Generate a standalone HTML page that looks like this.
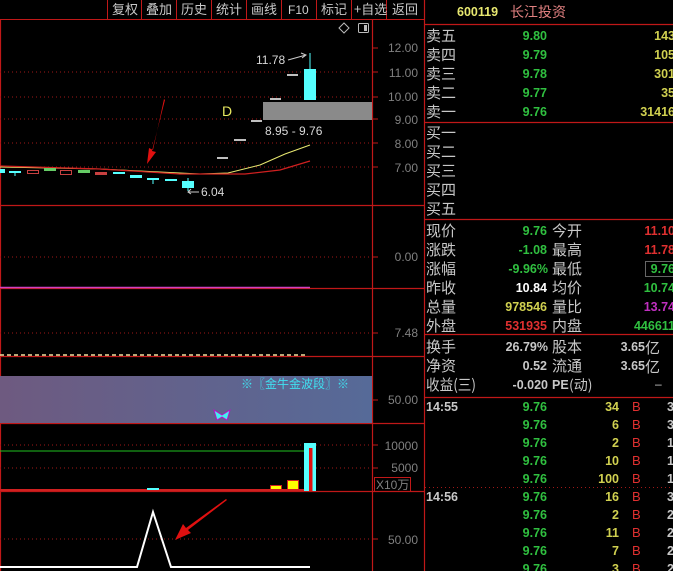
<!DOCTYPE html>
<html><head><meta charset="utf-8"><style>
html,body{margin:0;padding:0;background:#000;}
svg{display:block}
text{font-family:"Liberation Sans","Noto Sans CJK SC",sans-serif;}
.c{font-family:"Noto Sans CJK SC","WenQuanYi Zen Hei",sans-serif;font-size:15px;fill:#c8c8c8}
.n{font-size:12.5px;font-weight:bold}
.ax{font-size:12px;fill:#808080}
</style></head><body>
<svg width="673" height="571" viewBox="0 0 673 571" xmlns="http://www.w3.org/2000/svg">
<rect width="673" height="571" fill="#000"/>
<g stroke="#c01818" stroke-width="1">
<line x1="0" y1="19.5" x2="424" y2="19.5"/>
<line x1="107.5" y1="0" x2="107.5" y2="19"/><line x1="141.5" y1="0" x2="141.5" y2="19"/><line x1="176.5" y1="0" x2="176.5" y2="19"/><line x1="211.5" y1="0" x2="211.5" y2="19"/><line x1="246.5" y1="0" x2="246.5" y2="19"/><line x1="281.5" y1="0" x2="281.5" y2="19"/><line x1="316.5" y1="0" x2="316.5" y2="19"/><line x1="351.5" y1="0" x2="351.5" y2="19"/><line x1="386.5" y1="0" x2="386.5" y2="19"/>
</g>
<g>
<text x="112" y="14" class="c" style="font-size:13px">复权</text><text x="146" y="14" class="c" style="font-size:13px">叠加</text><text x="181" y="14" class="c" style="font-size:13px">历史</text><text x="216" y="14" class="c" style="font-size:13px">统计</text><text x="251" y="14" class="c" style="font-size:13px">画线</text><text x="288" y="14" style="font-size:12px;fill:#d0d0d0">F10</text><text x="321" y="14" class="c" style="font-size:13px">标记</text><text x="354" y="14" class="c" style="font-size:13px">+自选</text><text x="392" y="14" class="c" style="font-size:13px">返回</text>
</g>
<g stroke="#c01818" stroke-width="1.2">
<line x1="372.5" y1="20" x2="372.5" y2="571"/>
<line x1="424.5" y1="0" x2="424.5" y2="571"/>
<line x1="0" y1="205.5" x2="424" y2="205.5"/>
<line x1="0" y1="288.5" x2="424" y2="288.5"/>
<line x1="0" y1="356.5" x2="424" y2="356.5"/>
<line x1="0" y1="423.5" x2="424" y2="423.5"/>
<line x1="0" y1="491.5" x2="424" y2="491.5"/>
<line x1="0.5" y1="20" x2="0.5" y2="571"/>
</g>
<g stroke="#a01818" stroke-width="1" stroke-dasharray="1,3">
<line x1="0" y1="72" x2="372" y2="72"/><line x1="0" y1="97" x2="372" y2="97"/><line x1="0" y1="119" x2="372" y2="119"/><line x1="0" y1="143" x2="372" y2="143"/><line x1="0" y1="167" x2="372" y2="167"/>
<line x1="0" y1="257" x2="372" y2="257"/><line x1="0" y1="333" x2="372" y2="333"/>
<line x1="0" y1="445" x2="372" y2="445"/><line x1="0" y1="468" x2="372" y2="468"/><line x1="0" y1="539" x2="372" y2="539"/>
<line x1="425" y1="487.5" x2="673" y2="487.5"/>
</g>
<g stroke="#c01818"><line x1="372" y1="48" x2="378" y2="48"/><line x1="372" y1="72" x2="378" y2="72"/><line x1="372" y1="97" x2="378" y2="97"/><line x1="372" y1="119" x2="378" y2="119"/><line x1="372" y1="143" x2="378" y2="143"/><line x1="372" y1="167" x2="378" y2="167"/><line x1="372" y1="257" x2="378" y2="257"/><line x1="372" y1="333" x2="378" y2="333"/><line x1="372" y1="400" x2="378" y2="400"/><line x1="372" y1="445" x2="378" y2="445"/><line x1="372" y1="468" x2="378" y2="468"/><line x1="372" y1="539" x2="378" y2="539"/></g>
<g>
<text x="418" y="52" text-anchor="end" class="ax">12.00</text><text x="418" y="77" text-anchor="end" class="ax">11.00</text><text x="418" y="101" text-anchor="end" class="ax">10.00</text><text x="418" y="124" text-anchor="end" class="ax">9.00</text><text x="418" y="148" text-anchor="end" class="ax">8.00</text><text x="418" y="172" text-anchor="end" class="ax">7.00</text>
<text x="418" y="261" text-anchor="end" class="ax">0.00</text><text x="418" y="337" text-anchor="end" class="ax">7.48</text><text x="418" y="404" text-anchor="end" class="ax">50.00</text>
<text x="418" y="450" text-anchor="end" class="ax">10000</text><text x="418" y="472" text-anchor="end" class="ax">5000</text><text x="418" y="544" text-anchor="end" class="ax">50.00</text>
</g>
<rect x="374.5" y="477.5" width="36" height="14" fill="none" stroke="#c01818"/>
<text x="376" y="489" class="ax">X10万</text>
<path d="M344 23 L349 28 L344 33 L339 28 Z" fill="none" stroke="#bbb"/>
<rect x="358.5" y="23.5" width="10" height="9" rx="1" fill="none" stroke="#bbb"/><rect x="364" y="25" width="3" height="6" fill="#bbb"/>
<rect x="263" y="102" width="109" height="18" fill="#8a8a8a"/>
<text x="222" y="116" style="font-size:14px;fill:#e8e860">D</text>
<text x="256" y="64" style="font-size:12px;fill:#d8d8d8">11.78</text>
<path d="M288 60 L306 55 M301 53 L306 55 L302 58" stroke="#ccc" fill="none"/>
<text x="265" y="135" style="font-size:12px;fill:#d8d8d8">8.95 - 9.76</text>
<text x="201" y="196" style="font-size:12px;fill:#d8d8d8">6.04</text>
<path d="M199 192 L188 192 M191 189 L188 192 L191 194" stroke="#ccc" fill="none"/>
<line x1="310" y1="53" x2="310" y2="69" stroke="#5ff"/>
<rect x="304" y="69" width="12" height="31" fill="#5ff"/>
<g stroke="#fff" stroke-width="1.5"><line x1="217" y1="158" x2="228" y2="158"/><line x1="234" y1="140" x2="246" y2="140"/><line x1="251" y1="121" x2="262" y2="121"/><line x1="270" y1="99" x2="281" y2="99"/><line x1="287" y1="75" x2="298" y2="75"/></g>
<path d="M0 167 L100 169 L200 174 L228 173 L260 165 L285 154 L310 145" stroke="#e8e870" fill="none"/>
<path d="M0 166 L100 169 L180 174 L245 174 L280 170 L310 161" stroke="#d02020" fill="none" stroke-width="1.2"/>
<g fill="#5ff"><rect x="0" y="169" width="5" height="4"/><rect x="9" y="171" width="12" height="2"/><rect x="113" y="172" width="12" height="2"/><rect x="130" y="175" width="12" height="3"/><rect x="147" y="178" width="12" height="2"/><rect x="165" y="179" width="12" height="2"/><rect x="182" y="181" width="12" height="7"/></g>
<g stroke="#5ff"><line x1="15" y1="171" x2="15" y2="176"/><line x1="153" y1="178" x2="153" y2="184"/><line x1="188" y1="178" x2="188" y2="191"/></g>
<g fill="#6c6"><rect x="44" y="168" width="12" height="3"/><rect x="78" y="170" width="12" height="3"/></g>
<g fill="none" stroke="#c84040"><rect x="27.5" y="170.5" width="11" height="3"/><rect x="60.5" y="170.5" width="11" height="4"/></g>
<rect x="95" y="172" width="12" height="3" fill="#c84040"/>
<path d="M164 99 L153 150 L149 148 L147 164 L156 152 L152 151 L165 100 Z" fill="#e01010"/>
<line x1="0" y1="287.5" x2="310" y2="287.5" stroke="#d040c0" stroke-width="1.5"/>
<line x1="0" y1="355" x2="308" y2="355" stroke="#f0e0a0" stroke-dasharray="4,3" stroke-width="1.5"/>
<defs><linearGradient id="g" x1="0" x2="1"><stop offset="0" stop-color="#6e5a80"/><stop offset="1" stop-color="#566a98"/></linearGradient></defs>
<rect x="0" y="376" width="372" height="47" fill="url(#g)"/>
<text x="241" y="388" style="font-family:'Noto Sans CJK SC',sans-serif;font-size:12px;fill:#40e0f0">※〖金牛金波段〗※</text>
<path d="M214 410 L222 415 L230 410 L227 420 L222 417 L217 420 Z" fill="#4ee" stroke="#c0c" stroke-width="0.8"/>
<line x1="0" y1="451" x2="305" y2="451" stroke="#20c020"/>
<rect x="304" y="443" width="12" height="48" fill="#5ff"/>
<rect x="309" y="448" width="3.5" height="43" fill="#e01010"/>
<rect x="270.5" y="485.5" width="11" height="5" fill="#ff0" stroke="#d02020"/>
<rect x="287.5" y="480.5" width="11" height="10" fill="#ff0" stroke="#d02020"/>
<line x1="0" y1="490" x2="304" y2="490" stroke="#d02020" stroke-width="2"/>
<rect x="147" y="488" width="12" height="2" fill="#5ff"/>
<path d="M0 567 L137 567 L153 512 L171 567 L310 567" stroke="#fff" stroke-width="2" fill="none"/>
<path d="M226 499 L186 528 L183 524 L175 540 L191 533 L188 530 L227 500 Z" fill="#e01010"/>
<g stroke="#c01818" stroke-width="1.2"><line x1="424" y1="24.5" x2="673" y2="24.5"/><line x1="424" y1="122.5" x2="673" y2="122.5"/><line x1="424" y1="219.5" x2="673" y2="219.5"/><line x1="424" y1="334.5" x2="673" y2="334.5"/><line x1="424" y1="397.5" x2="673" y2="397.5"/></g>
<text x="457" y="16" class="n" style="fill:#e8e870">600119</text>
<text x="510" y="17" class="c" style="fill:#e08080;font-size:14px">长江投资</text>
<g><text x="426" y="41" class="c">卖五</text><text x="426" y="60" class="c">卖四</text><text x="426" y="79" class="c">卖三</text><text x="426" y="98" class="c">卖二</text><text x="426" y="117" class="c">卖一</text>
<text x="426" y="138" class="c">买一</text><text x="426" y="157" class="c">买二</text><text x="426" y="176" class="c">买三</text><text x="426" y="195" class="c">买四</text><text x="426" y="214" class="c">买五</text>
<text x="426" y="236" class="c">现价</text><text x="426" y="255" class="c">涨跌</text><text x="426" y="274" class="c">涨幅</text><text x="426" y="293" class="c">昨收</text><text x="426" y="312" class="c">总量</text><text x="426" y="331" class="c">外盘</text>
<text x="552" y="236" class="c">今开</text><text x="552" y="255" class="c">最高</text><text x="552" y="274" class="c">最低</text><text x="552" y="293" class="c">均价</text><text x="552" y="312" class="c">量比</text><text x="552" y="331" class="c">内盘</text>
<text x="426" y="352" class="c">换手</text><text x="426" y="371" class="c">净资</text><text x="426" y="390" class="c" textLength="50" lengthAdjust="spacingAndGlyphs">收益(三)</text>
<text x="552" y="352" class="c">股本</text><text x="552" y="371" class="c">流通</text></g>
<g text-anchor="end">
<text x="547" y="40" class="n" fill="#30c040">9.80</text><text x="547" y="59" class="n" fill="#30c040">9.79</text><text x="547" y="78" class="n" fill="#30c040">9.78</text><text x="547" y="97" class="n" fill="#30c040">9.77</text><text x="547" y="116" class="n" fill="#30c040">9.76</text>
<text x="675" y="40" class="n" fill="#d0d050">143</text><text x="675" y="59" class="n" fill="#d0d050">105</text><text x="675" y="78" class="n" fill="#d0d050">301</text><text x="675" y="97" class="n" fill="#d0d050">35</text><text x="675" y="116" class="n" fill="#d0d050">31416</text>
<text x="547" y="235" class="n" fill="#30c040">9.76</text><text x="547" y="254" class="n" fill="#30c040">-1.08</text><text x="548" y="273" class="n" fill="#30c040">-9.96%</text><text x="547" y="292" class="n" fill="#fff">10.84</text><text x="547" y="311" class="n" fill="#d0d050">978546</text><text x="547" y="330" class="n" fill="#e03030">531935</text>
<text x="675" y="235" class="n" fill="#e03030">11.10</text><text x="675" y="254" class="n" fill="#e03030">11.78</text><text x="675" y="273" class="n" fill="#30c040">9.76</text><text x="675" y="292" class="n" fill="#30c040">10.74</text><text x="675" y="311" class="n" fill="#c030c0">13.74</text><text x="675" y="330" class="n" fill="#30c040">446611</text>
<text x="548" y="351" class="n" fill="#c8c8c8">26.79%</text><text x="547" y="370" class="n" fill="#c8c8c8">0.52</text><text x="548" y="389" class="n" fill="#c8c8c8">-0.020</text>
</g>
<rect x="645.5" y="261.5" width="30" height="15" fill="none" stroke="#666"/>
<text x="645" y="351" class="n" text-anchor="end" fill="#c8c8c8">3.65</text><text x="645" y="370" class="n" text-anchor="end" fill="#c8c8c8">3.65</text>
<text x="645" y="353" class="c">亿</text><text x="645" y="372" class="c">亿</text>
<text x="552" y="389" class="n" fill="#c8c8c8">PE</text><text x="569" y="390" class="c" style="font-size:14px">(动)</text>
<text x="655" y="388" style="font-size:12px;fill:#c8c8c8">–</text>
<text x="426" y="411" class="n" fill="#c8c8c8">14:55</text><text x="426" y="501" class="n" fill="#c8c8c8">14:56</text>
<g text-anchor="end" fill="#30c040">
<text x="547" y="411" class="n">9.76</text><text x="547" y="429" class="n">9.76</text><text x="547" y="447" class="n">9.76</text><text x="547" y="465" class="n">9.76</text><text x="547" y="483" class="n">9.76</text>
<text x="547" y="501" class="n">9.76</text><text x="547" y="519" class="n">9.76</text><text x="547" y="537" class="n">9.76</text><text x="547" y="555" class="n">9.76</text><text x="547" y="573" class="n">9.76</text>
</g>
<g text-anchor="end" fill="#d0d050">
<text x="619" y="411" class="n">34</text><text x="619" y="429" class="n">6</text><text x="619" y="447" class="n">2</text><text x="619" y="465" class="n">10</text><text x="619" y="483" class="n">100</text>
<text x="619" y="501" class="n">16</text><text x="619" y="519" class="n">2</text><text x="619" y="537" class="n">11</text><text x="619" y="555" class="n">7</text><text x="619" y="573" class="n">3</text>
</g>
<g style="font-size:13px;fill:#e03030">
<text x="632" y="411">B</text><text x="632" y="429">B</text><text x="632" y="447">B</text><text x="632" y="465">B</text><text x="632" y="483">B</text><text x="632" y="501">B</text><text x="632" y="519">B</text><text x="632" y="537">B</text><text x="632" y="555">B</text><text x="632" y="573">B</text>
</g>
<g fill="#c8c8c8">
<text x="667" y="411" class="n">3</text><text x="667" y="429" class="n">3</text><text x="667" y="447" class="n">1</text><text x="667" y="465" class="n">1</text><text x="667" y="483" class="n">1</text><text x="667" y="501" class="n">3</text><text x="667" y="519" class="n">2</text><text x="667" y="537" class="n">2</text><text x="667" y="555" class="n">2</text><text x="667" y="573" class="n">2</text>
</g>
</svg>
</body></html>
